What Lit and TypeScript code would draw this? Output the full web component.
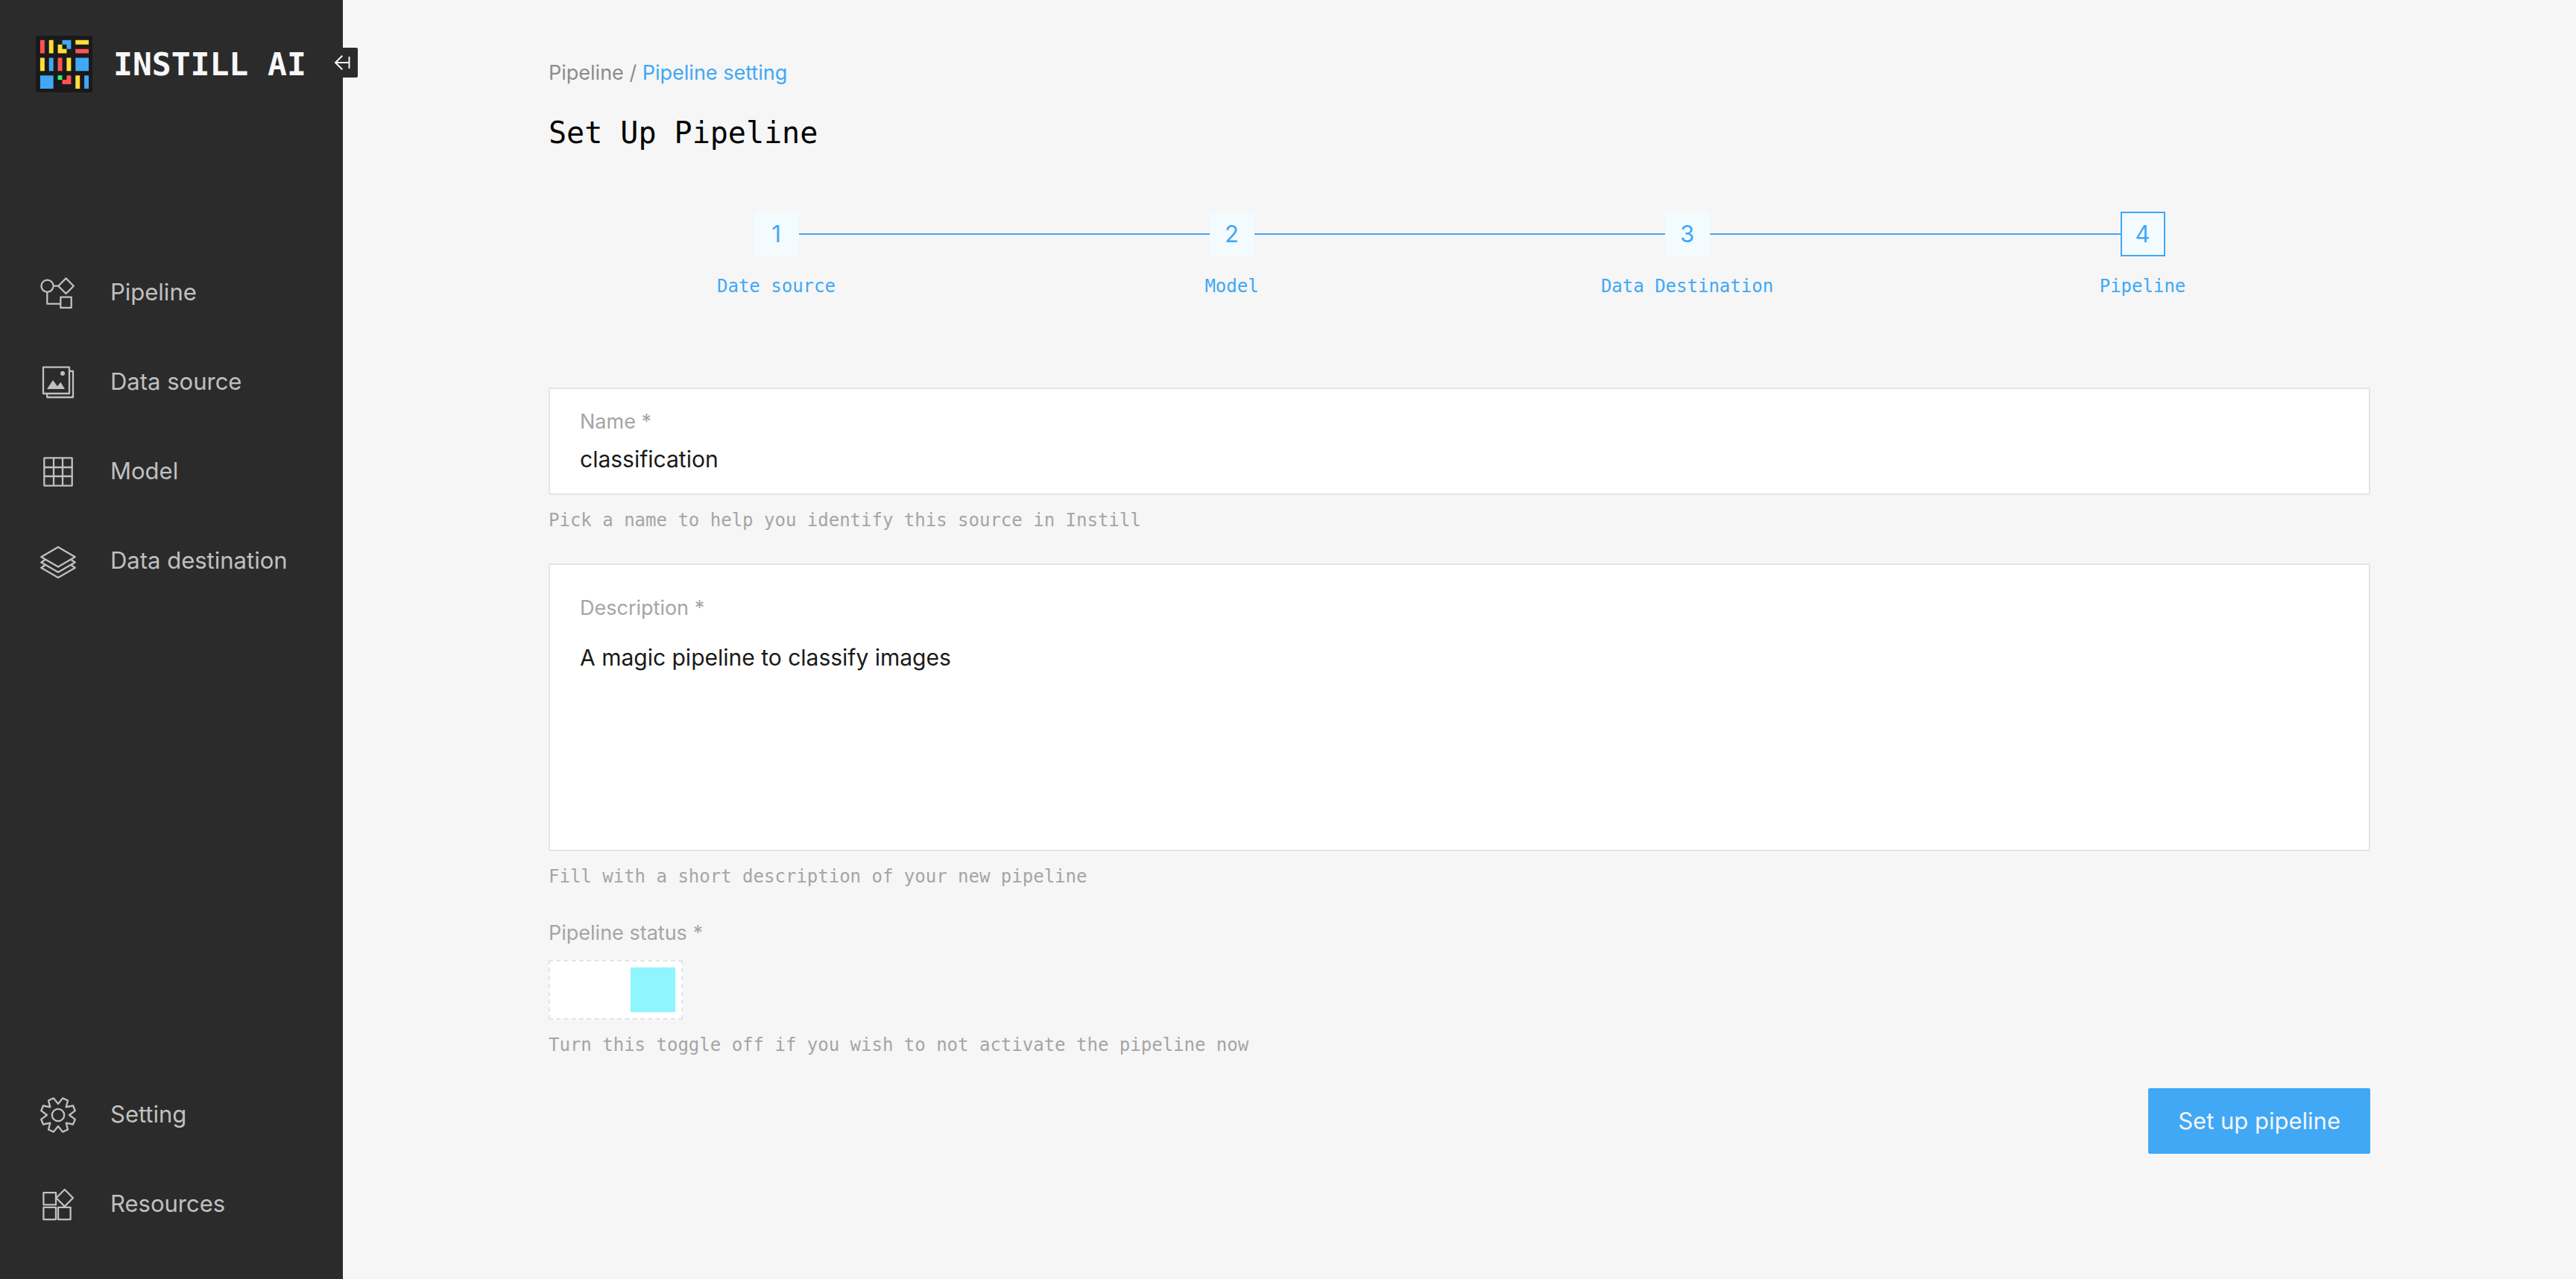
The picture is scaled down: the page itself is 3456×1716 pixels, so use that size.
import { LitElement, html, css, svg } from "lit";
import { customElement, state } from "lit/decorators.js";
import { classMap } from "lit/directives/class-map.js";

const icons = {
  pipeline: svg`
    <circle cx="9.5" cy="15.7" r="8.1" />
    <path d="M17.6 15.7H24.5M34.5 5.4L44.8 15.7L34.5 26L24.2 15.7ZM9.3 24V39.7H27.3" />
    <rect x="27.3" y="30.7" width="14.4" height="14.2" />`,
  source: svg`
    <rect x="4" y="4.7" width="35" height="35.3" />
    <path d="M39.5 10H44V45H9.2V40.5" />
    <circle class="solid" cx="30" cy="13" r="3" />
    <path class="solid" d="M9 34L17 22L23 30.3L27.3 24.7L33 34Z" />`,
  model: svg`
    <rect x="5.3" y="6.3" width="37.4" height="37.4" rx="0.5" />
    <path d="M18 6.3V43.7M30 6.3V43.7M5.3 19H42.7M5.3 31H42.7" />`,
  destination: svg`
    <path d="M24 6L46.7 19.3L24 32.5L1.3 19.3Z" />
    <path d="M6.5 23L1.3 26.5L24 39.7L46.7 26.5L41.5 23" />
    <path d="M6.5 30.3L1.3 33.8L24 47L46.7 33.8L41.5 30.3" />`,
  setting: svg`
    <circle cx="24" cy="25" r="8.2" />
    <path
      d="M24 10L30.1 2.4L37 5.5L34.7 14.4L44 12.5L46.8 19.2L39 25L46.8 30.8L44 37.5L34.7 35.6L37 44.5L30.1 47.6L24 40L17.9 47.6L11 44.5L13.3 35.6L4 37.5L1.2 30.8L9 25L1.2 19.2L4 12.5L13.3 14.4L11 5.5L17.9 2.4Z"
    />`,
  resources: svg`
    <rect x="4.4" y="9.1" width="16.6" height="16.3" />
    <rect x="4.4" y="28.8" width="16.6" height="16.3" />
    <rect x="24" y="28.8" width="16.6" height="16.3" />
    <path d="M32.7 5L44 16.3L32.7 27.6L21.4 16.3Z" />`,
};

type IconName = keyof typeof icons;

const mainLinks: { icon: IconName; label: string }[] = [
  { icon: "pipeline", label: "Pipeline" },
  { icon: "source", label: "Data source" },
  { icon: "model", label: "Model" },
  { icon: "destination", label: "Data destination" },
];

const footLinks: { icon: IconName; label: string }[] = [
  { icon: "setting", label: "Setting" },
  { icon: "resources", label: "Resources" },
];

@customElement("side-bar")
class SideBar extends LitElement {
  static styles = css`
    :host {
      position: relative;
      display: flex;
      flex-direction: column;
      box-sizing: border-box;
      padding: 48px 0 77px 48px;
      background: #2b2b2b;
      color: #c0c0c0;
      font-family: Inter, "Liberation Sans", sans-serif;
    }
    .brand {
      display: flex;
      align-items: center;
      gap: 28px;
      margin-bottom: 244px;
      color: #f7f7f7;
      text-decoration: none;
    }
    .mark {
      width: 76px;
      height: 76px;
      flex: none;
    }
    .mark .tile { fill: #1a1a1a; }
    .mark .red { fill: #ff5353; }
    .mark .yellow { fill: #ffdf3a; }
    .mark .blue { fill: #40a8f5; }
    .mark .green { fill: #2cf57a; }
    .name {
      font: bold 43px/76px "DejaVu Sans Mono", monospace;
      white-space: nowrap;
    }
    .links {
      display: flex;
      flex-direction: column;
      gap: 72px;
      margin: 0;
      padding: 0 0 0 6px;
      list-style: none;
    }
    .foot {
      margin-top: auto;
    }
    .link {
      display: flex;
      gap: 46px;
      color: inherit;
      font-size: 31px;
      line-height: 48px;
      text-decoration: none;
    }
    .icon {
      width: 48px;
      height: 48px;
      flex: none;
      overflow: visible;
      fill: none;
      stroke: #c0c0c0;
      stroke-width: 2.3;
      stroke-linejoin: round;
    }
    .icon .solid {
      fill: #c0c0c0;
      stroke: none;
    }
    .collapse {
      position: absolute;
      top: 64px;
      right: -20px;
      width: 40px;
      height: 40px;
      padding: 0;
      border: 0;
      border-radius: 2px;
      background: #2b2b2b;
    }
    .collapse svg {
      display: block;
      fill: none;
      stroke: #f5f5f5;
      stroke-width: 2;
    }
  `;

  private links(items: { icon: IconName; label: string }[]) {
    return items.map(
      (item) => html`<li>
        <a class="link" href="#">
          <svg class="icon" viewBox="0 0 48 48" aria-hidden="true">${icons[item.icon]}</svg>
          <span>${item.label}</span>
        </a>
      </li>`
    );
  }

  render() {
    return html`
      <a class="brand" href="#">
        <svg class="mark" viewBox="0 0 76 76" aria-hidden="true">
          <rect class="tile" width="76" height="76" />
          <g transform="translate(5.9 5.8) scale(5.92)">
            <path class="red" d="M0 0h1v3h-1zM8 2h3v1h-3zM4 4h1v3h-1zM6 8h1v2h-2v-1h1z" />
            <path class="yellow" d="M2 0h1v3h-1zM4 1h1v1h1v1h-2zM8 0h3v1h-3zM0 4h1v3h-1zM6 4h1v3h-1zM8 8h1v3h-1z" />
            <path class="blue" d="M5 0h2v2h-1v-1h-1zM2 4h1v3h-1zM8 4h3v3h-3zM0 8h3v3h-3zM10 8h1v3h-1z" />
            <path class="green" d="M4 8h1v1h-1z" />
          </g>
        </svg>
        <span class="name">INSTILL AI</span>
      </a>
      <nav>
        <ul class="links">${this.links(mainLinks)}</ul>
      </nav>
      <nav class="foot">
        <ul class="links">${this.links(footLinks)}</ul>
      </nav>
      <button class="collapse" type="button" aria-label="Collapse">
        <svg viewBox="0 0 40 40" width="40" height="40">
          <path d="M28.5 20H10M19.3 10.7L10 20L19.3 29.3M28.5 12V28" />
        </svg>
      </button>
    `;
  }
}

@customElement("step-progress")
class StepProgress extends LitElement {
  static styles = css`
    :host {
      display: block;
      color: #40a8f5;
    }
    .steps {
      display: grid;
      grid-auto-flow: column;
      grid-auto-columns: 1fr;
      margin: 0;
      padding: 0;
      list-style: none;
    }
    .step {
      display: grid;
      grid-template-columns: 1fr 60px 1fr;
      align-items: center;
      row-gap: 24px;
    }
    .rule {
      height: 2px;
      background: #40a8f5;
    }
    .rule.blank {
      background: none;
    }
    .box {
      box-sizing: border-box;
      height: 60px;
      border: 2px solid #f3fbff;
      background: #f3fbff;
      font: 31px/56px Inter, "Liberation Sans", sans-serif;
      text-align: center;
    }
    .box.current {
      border-color: #40a8f5;
    }
    .label {
      grid-column: 1 / -1;
      font: 24px/32px "DejaVu Sans Mono", monospace;
      text-align: center;
    }
  `;

  private names = ["Date source", "Model", "Data Destination", "Pipeline"];

  render() {
    const last = this.names.length - 1;
    return html`<ol class="steps">
      ${this.names.map(
        (name, i) => html`<li class="step">
          <span class=${classMap({ rule: true, blank: i === 0 })}></span>
          <span class=${classMap({ box: true, current: i === last })}>${i + 1}</span>
          <span class=${classMap({ rule: true, blank: i === last })}></span>
          <span class="label">${name}</span>
        </li>`
      )}
    </ol>`;
  }
}

@customElement("app-root")
class AppRoot extends LitElement {
  static styles = css`
    :host {
      display: grid;
      grid-template-columns: 460px minmax(0, 1fr);
      min-height: 100vh;
      background: #f6f6f6;
      font-family: Inter, "Liberation Sans", sans-serif;
    }
    .page {
      padding: 78px 276px;
    }
    .crumbs {
      color: #8c8c8c;
      font-size: 27px;
      line-height: 40px;
    }
    .crumbs a {
      color: inherit;
      text-decoration: none;
    }
    .crumbs .here {
      color: #40a8f5;
    }
    .title {
      margin: 32px 0 78px;
      color: #000;
      font: 40px/56px "DejaVu Sans Mono", monospace;
    }
    .form {
      display: flex;
      flex-direction: column;
      gap: 42px;
      margin-top: 120px;
    }
    .group {
      display: flex;
      flex-direction: column;
      align-items: flex-start;
      gap: 18px;
    }
    .field {
      display: flex;
      flex-direction: column;
      box-sizing: border-box;
      width: 100%;
      gap: 12px;
      padding: 26px 40px;
      border: 2px solid #e4e4e4;
      border-radius: 2px;
      background: #fff;
    }
    .field.tall {
      gap: 28px;
      padding: 40px 40px 38px;
    }
    .caption {
      color: #a5a5a5;
      font-size: 27px;
      line-height: 36px;
    }
    .entry {
      display: block;
      box-sizing: border-box;
      width: 100%;
      height: 40px;
      margin: 0;
      padding: 0;
      border: 0;
      outline: 0;
      background: none;
      color: #1a1a1a;
      font: 30px/40px Inter, "Liberation Sans", sans-serif;
      resize: none;
    }
    .entry.area {
      height: 240px;
    }
    .hint {
      margin: 0;
      color: #a5a5a5;
      font: 24px/32px "DejaVu Sans Mono", monospace;
    }
    .toggle {
      appearance: none;
      display: flex;
      box-sizing: border-box;
      width: 180px;
      height: 80px;
      margin: 0;
      padding: 8px;
      border: 2px dashed #e4e4e4;
      background: #fff;
    }
    .toggle::before {
      content: "";
      width: 60px;
      height: 60px;
      background: #c0c0c0;
    }
    .toggle:checked::before {
      margin-left: auto;
      background: #8ff5ff;
    }
    .submit {
      align-self: flex-end;
      padding: 0 40px;
      border: 0;
      border-radius: 2px;
      background: #40a8f5;
      color: #f5f5f5;
      font: 31px/88px Inter, "Liberation Sans", sans-serif;
    }
  `;

  @state() private active = true;

  private onToggle(e: Event) {
    this.active = (e.target as HTMLInputElement).checked;
  }

  render() {
    return html`
      <side-bar></side-bar>
      <main class="page">
        <nav class="crumbs"><a href="#">Pipeline</a> / <a class="here" href="#">Pipeline setting</a></nav>
        <h1 class="title">Set Up Pipeline</h1>
        <step-progress></step-progress>
        <form class="form" @submit=${(e: Event) => e.preventDefault()}>
          <div class="group">
            <div class="field">
              <label class="caption" for="name">Name *</label>
              <input class="entry" id="name" type="text" value="classification" />
            </div>
            <p class="hint">Pick a name to help you identify this source in Instill</p>
          </div>
          <div class="group">
            <div class="field tall">
              <label class="caption" for="description">Description *</label>
              <textarea class="entry area" id="description" .value=${"A magic pipeline to classify images"}></textarea>
            </div>
            <p class="hint">Fill with a short description of your new pipeline</p>
          </div>
          <div class="group">
            <label class="caption" for="status">Pipeline status *</label>
            <input class="toggle" id="status" type="checkbox" role="switch" .checked=${this.active} @change=${this.onToggle} />
            <p class="hint">Turn this toggle off if you wish to not activate the pipeline now</p>
          </div>
          <button class="submit" type="submit">Set up pipeline</button>
        </form>
      </main>
    `;
  }
}
